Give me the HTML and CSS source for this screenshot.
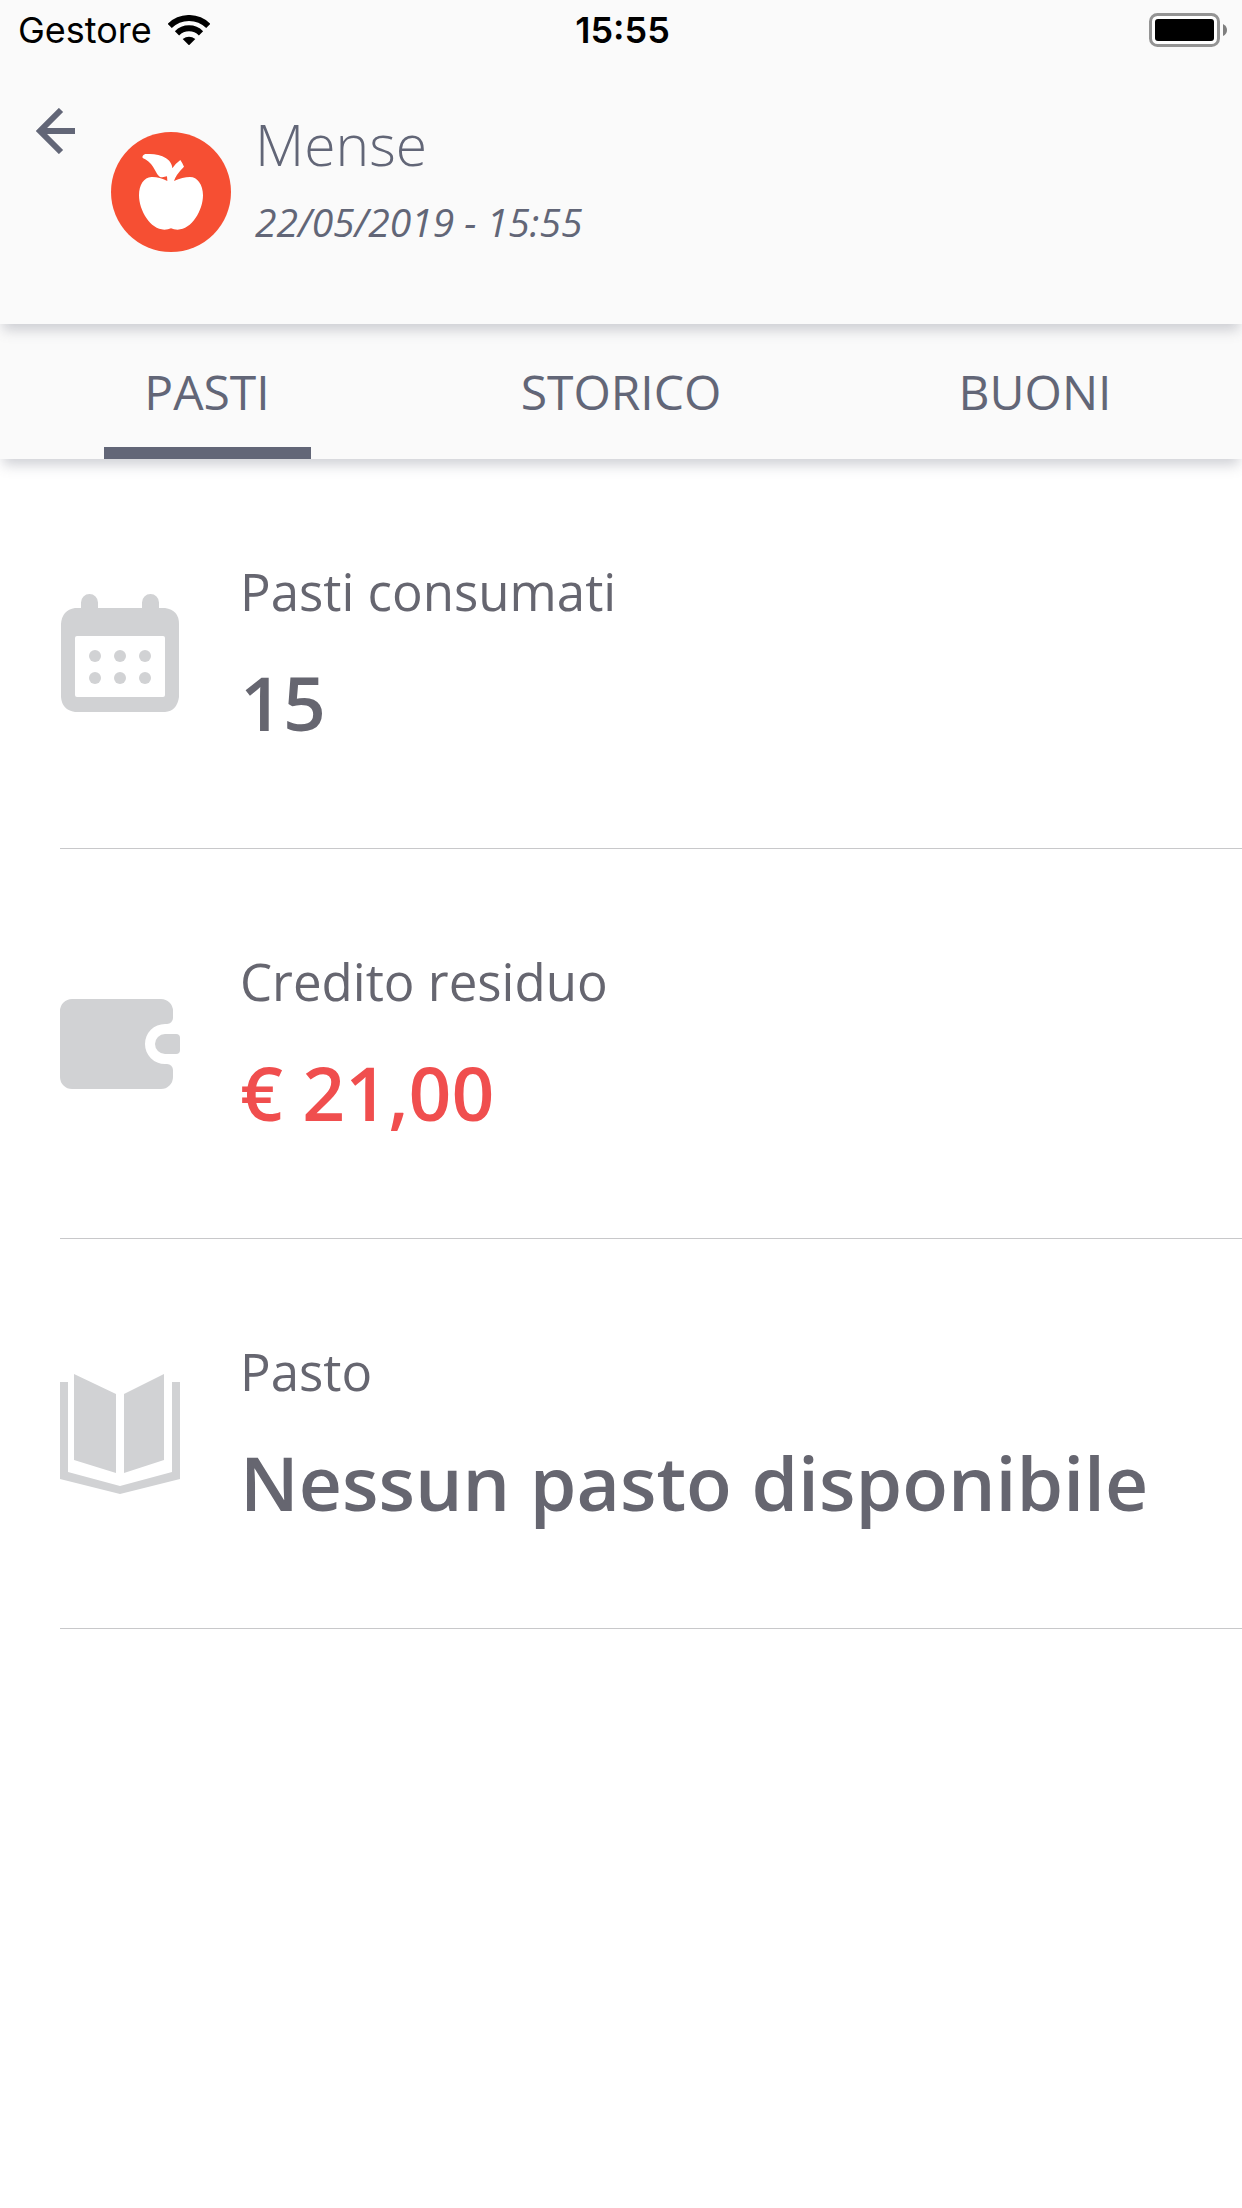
FILE: index.html
```
<!DOCTYPE html>
<html lang="it">
<head>
  <meta charset="UTF-8">
  <meta name="viewport" content="width=device-width, initial-scale=1.0">
  <title>Mense</title>
  <link rel="stylesheet" href="styles.css">
</head>
<body>
  <header class="header">
    <div class="status-bar">
      <div class="carrier">
        <span>Gestore</span>
        <svg class="wifi" viewBox="504 44 126 91" aria-hidden="true">
          <path d="M509 77a82 82 0 0 1 116 0M531 99a51 51 0 0 1 72 0" fill="none" stroke="#000" stroke-width="18"/>
          <path d="M567 135l-19-19q19-14 38 0z"/>
        </svg>
      </div>
      <div class="clock">15:55</div>
      <svg class="battery" viewBox="0 0 78 34" aria-hidden="true">
        <rect x="1.5" y="1.5" width="68" height="31" rx="7" fill="#fff" stroke="#949494" stroke-width="3"/>
        <rect x="6" y="6" width="59" height="22" rx="3"/>
        <path d="M74 11q4 2 4 6t-4 6z" fill="#7f7f7f"/>
      </svg>
    </div>

    <div class="title-bar">
      <button class="back-btn" type="button" aria-label="Indietro">
        <svg viewBox="0 0 39 46" aria-hidden="true">
          <path d="M39 23H5M25 2L4 23l21 21" fill="none" stroke="currentColor" stroke-width="6"/>
        </svg>
      </button>
      <svg class="logo" viewBox="0 0 360 360" aria-hidden="true">
        <circle cx="180" cy="180" r="180" fill="#f64f33"/>
        <path fill="#fff" d="M169 147Q144 134 121 135C99 136 84 158 84 190C84 235 118 293 160 293Q172 293 180 289Q188 293 200 293C242 293 276 235 276 190C276 158 259 135 237 135Q215 135 189 147Q194 129 219 104Q215 94 208 84Q194 94 184 109C183 91 170 80 154 73C138 66 121 66 103 66Q92 70 95 78Q114 86 126 104C136 119 140 136 154 136L168 133z"/>
      </svg>
      <div class="heading">
        <h1>Mense</h1>
        <p>22/05/2019 - 15:55</p>
      </div>
    </div>
  </header>

  <nav class="tabs" role="tablist">
    <button class="tab active" type="button" role="tab" aria-selected="true">PASTI</button>
    <button class="tab" type="button" role="tab" aria-selected="false">STORICO</button>
    <button class="tab" type="button" role="tab" aria-selected="false">BUONI</button>
  </nav>

  <main class="meal-list">
    <section class="meal-item">
      <svg class="meal-icon" viewBox="0 0 120 120" aria-hidden="true">
        <path d="M15 14h6V8.500a8.500 8.500 0 0 1 17 0V14h44V8.500a8.500 8.500 0 0 1 17 0V14h6q14 2 14 16v73q-2 14-14 15H15q-13-2-14-15V30q1-14 14-16z"/>
        <rect x="15" y="42" width="90" height="61" rx="2" fill="#fff"/>
        <circle cx="35" cy="62" r="6"/>
        <circle cx="60" cy="62" r="6"/>
        <circle cx="85" cy="62" r="6"/>
        <circle cx="35" cy="84" r="6"/>
        <circle cx="60" cy="84" r="6"/>
        <circle cx="85" cy="84" r="6"/>
      </svg>
      <div class="meal-info">
        <h2>Pasti consumati</h2>
        <p>15</p>
      </div>
    </section>

    <section class="meal-item">
      <svg class="meal-icon" viewBox="0 0 120 120" aria-hidden="true">
        <path d="M12 15h89a12 12 0 0 1 12 12v7a6 6 0 0 1-6 6h-2a20 20 0 0 0 0 40h2a6 6 0 0 1 6 6v7a12 12 0 0 1-12 12H12A12 12 0 0 1 0 93V27a12 12 0 0 1 12-12z"/>
        <path d="M105 50h11a4 4 0 0 1 4 4v12a4 4 0 0 1-4 4h-11a10 10 0 0 1 0-20z"/>
      </svg>
      <div class="meal-info">
        <h2>Credito residuo</h2>
        <p class="credit">€ 21,00</p>
      </div>
    </section>

    <section class="meal-item">
      <svg class="meal-icon" viewBox="0 0 120 120" aria-hidden="true">
        <path d="M0 8h8v90l52 14 52-14V8h8v97l-60 15-60-15z"/>
        <path d="M14 0l42 20v79l-42-13zM104 0L64 20v79l40-13z"/>
      </svg>
      <div class="meal-info">
        <h2>Pasto</h2>
        <p>Nessun pasto disponibile</p>
      </div>
    </section>
  </main>
</body>
</html>
```
FILE: styles.css
```
* {
  margin: 0;
  padding: 0;
  box-sizing: border-box;
}

body {
  min-height: 100vh;
  font-family: 'Open Sans', 'Noto Sans', sans-serif;
  background: #fff;
  color: #626677;
}

button {
  border: none;
  background: none;
  color: inherit;
  font: inherit;
  cursor: pointer;
}

svg {
  display: block;
  flex: none;
}

.header,
.tabs {
  position: relative;
  background: #fafafa;
  box-shadow: 0 9px 12px -3px rgba(98, 102, 119, 0.3);
}

.header {
  z-index: 2;
  padding-bottom: 60px;
}

/* status bar */
.status-bar {
  display: grid;
  grid-template-columns: 1fr auto 1fr;
  align-items: center;
  height: 60px;
  padding: 0 15px 0 18px;
  font-family: Inter, sans-serif;
  font-size: 36px;
  color: #000;
}

.carrier {
  display: flex;
  align-items: center;
  gap: 16px;
}

.wifi {
  width: 42px;
}

.clock {
  font-weight: 600;
}

.battery {
  width: 78px;
  justify-self: end;
}

/* title */
.title-bar {
  display: flex;
  align-items: flex-start;
  padding: 48px 36px 0;
}

.back-btn svg {
  width: 39px;
}

.logo {
  width: 120px;
  margin: 24px 24px 0 36px;
}

.heading h1 {
  font-size: 57px;
  font-weight: 300;
  line-height: 72px;
}

.heading p {
  font-size: 39px;
  font-style: italic;
  line-height: 84px;
}

/* tabs */
.tabs {
  z-index: 1;
  display: grid;
  grid-template-columns: repeat(3, 1fr);
}

.tab {
  display: flex;
  flex-direction: column;
  align-items: center;
  font-size: 48px;
  line-height: 123px;
  padding-top: 6px;
}

.tab::after {
  content: '';
  width: 50%;
  height: 12px;
  margin-top: -6px;
}

.tab.active::after {
  background: #626677;
}

/* list */
.meal-item {
  display: flex;
  align-items: center;
  gap: 60px;
  min-height: 390px;
  margin-left: 60px;
  border-bottom: 1px solid #c8c8ca;
  color: #666670;
}

.meal-icon {
  width: 120px;
  fill: #d1d2d4;
}

.meal-info h2 {
  margin-bottom: 6px;
  font-size: 51px;
  font-weight: 400;
  line-height: 90px;
}

.meal-info p {
  font-size: 75px;
  font-weight: 600;
  line-height: 120px;
}

.meal-info .credit {
  color: #f04e4e;
}
```
